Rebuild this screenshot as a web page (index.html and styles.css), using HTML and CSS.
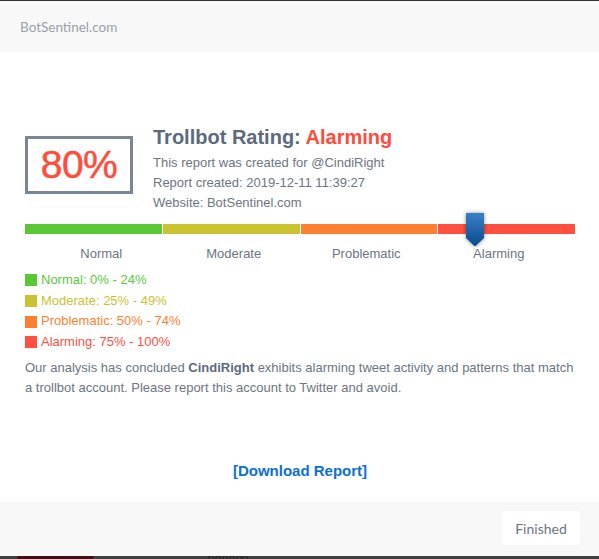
FILE: index.html
```html
<!DOCTYPE html>
<html>
<head>
<meta charset="utf-8">
<link rel="stylesheet" href="styles.css">
</head>
<body>
<div class="topline"></div>
<header class="hdr">BotSentinel.com</header>
<main class="content">
  <section class="summary">
    <div class="score">80%</div>
    <div class="info">
      <h1 class="title">Trollbot Rating: <span class="alarm">Alarming</span></h1>
      <div class="meta">This report was created for @CindiRight</div>
      <div class="meta">Report created: 2019-12-11 11:39:27</div>
      <div class="meta">Website: BotSentinel.com</div>
    </div>
  </section>
  <div class="bar">
    <div class="seg s1"></div>
    <div class="seg s2"></div>
    <div class="seg s3"></div>
    <div class="seg s4"></div>
    <svg class="marker" width="26" height="42" viewBox="0 0 26 42">
      <defs>
        <linearGradient id="mg" x1="0" y1="0" x2="0" y2="1">
          <stop offset="0" stop-color="#3b80c6"/>
          <stop offset="1" stop-color="#084a8e"/>
        </linearGradient>
        <filter id="sh" x="-50%" y="-30%" width="200%" height="160%">
          <feGaussianBlur stdDeviation="2.2"/>
        </filter>
      </defs>
      <path d="M4 4 H22 V29 L14 37 H12 L4 29 Z" fill="#000" opacity="0.45" filter="url(#sh)"/>
      <path d="M4 4 H22 V29 L13.6 37 H12.4 L4 29 Z" fill="url(#mg)"/>
    </svg>
  </div>
  <div class="labels">
    <span>Normal</span><span>Moderate</span><span>Problematic</span><span>Alarming</span>
  </div>
  <ul class="legend">
    <li class="l1"><i></i>Normal: 0% - 24%</li>
    <li class="l2"><i></i>Moderate: 25% - 49%</li>
    <li class="l3"><i></i>Problematic: 50% - 74%</li>
    <li class="l4"><i></i>Alarming: 75% - 100%</li>
  </ul>
  <p class="conclusion">Our analysis has concluded <b>CindiRight</b> exhibits alarming tweet activity and patterns that match a trollbot account. Please report this account to Twitter and avoid.</p>
  <div class="dl"><a href="#">[Download Report]</a></div>
</main>
<footer class="ftr">
  <button class="btn">Finished</button>
</footer>
<div class="under"><span class="redshape"></span>
  <svg class="dots" width="40" height="4" viewBox="0 0 40 4"><g fill="none" stroke="#1e1e1e" stroke-width="1"><circle cx="3" cy="2" r="2.2"/><circle cx="10" cy="2" r="2.2"/><circle cx="17" cy="2" r="2.2"/><circle cx="24" cy="2" r="2.2"/><circle cx="31" cy="2" r="2.2"/><circle cx="37" cy="2" r="2.2"/></g></svg>
</div>
</body>
</html>
```
FILE: styles.css
```css
* { box-sizing: border-box; }
html, body { margin: 0; padding: 0; background: #fff; }
body { font-family: "Liberation Sans", Arial, sans-serif; width: 599px; height: 559px; overflow: hidden; }
.topline { height: 1px; background: #333; }
.hdr {
  height: 51px; background: #f8f8f8; padding-left: 20px;
  font-family: Lato, sans-serif; font-size: 13.5px; color: #99a0ab;
  display: flex; align-items: center; padding-top: 1px;
}
.content { height: 450px; padding: 73px 24px 0 25px; }
.summary { display: flex; align-items: flex-start; }
.score {
  width: 108px; height: 58px; margin-top: 11px; margin-right: 20px;
  border: 3px solid #7a8693; color: #ff4c3b;
  font-size: 39px; display: flex; align-items: center; justify-content: center;
  letter-spacing: -0.5px; -webkit-text-stroke: 0.5px #ff4c3b;
}
.title { margin: 0 0 4px; font-size: 20px; line-height: 24px; font-weight: bold; color: #5b6a7d; }
.alarm { color: #ff4c3b; }
.meta { font-size: 13px; line-height: 20px; color: #6c7583; }
.bar { position: relative; display: flex; gap: 1px; height: 10px; margin-top: 11px; width: 550px; }
.seg { flex: 1; height: 10px; }
.s1 { background: #58c934; }
.s2 { background: #cbc232; }
.s3 { background: #ff7f30; }
.s4 { background: #ff4f3f; }
.marker { position: absolute; left: 437px; top: -15px; }
.labels { display: grid; grid-template-columns: repeat(4, 132.5px); margin: 11px 0 0 10px; font-size: 13px; line-height: 18px; color: #6c7583; }
.labels span { text-align: center; }
.legend { list-style: none; margin: 7px 0 0; padding: 0; font-size: 13px; line-height: 20.7px; }
.legend li { display: flex; align-items: center; gap: 4px; }
.legend i { width: 12px; height: 12px; display: block; }
.l1 { color: #5ac93a; } .l1 i { background: #58c934; }
.l2 { color: #cbc232; } .l2 i { background: #cbc232; }
.l3 { color: #ff7f30; } .l3 i { background: #ff7f30; }
.l4 { color: #ff4f3f; } .l4 i { background: #ff4f3f; }
.conclusion { margin: 5px 0 0; font-size: 13px; line-height: 20px; color: #6c7583; }
.conclusion b { color: #5b6a7d; }
.dl { text-align: center; margin-top: 63px; font-size: 15px; line-height: 20px; font-weight: bold; }
.dl a { color: #0b6fd9; text-decoration: none; }
.ftr { height: 54px; background: #f8f8f8; display: flex; justify-content: flex-end; align-items: flex-start; padding: 9px 19px 0 0; }
.btn {
  width: 78px; height: 34px; background: #fff; border: none; border-radius: 4px;
  font-family: Lato, sans-serif; font-size: 14px; color: #6c7583; padding: 0;
}
.under { height: 4px; background: #404040; position: relative; overflow: hidden; }
.redshape { position: absolute; left: 17px; top: 0; width: 76px; height: 4px; background: #3f1014; transform: skewX(-30deg); }
.dots { position: absolute; left: 208px; top: 0; }
```
